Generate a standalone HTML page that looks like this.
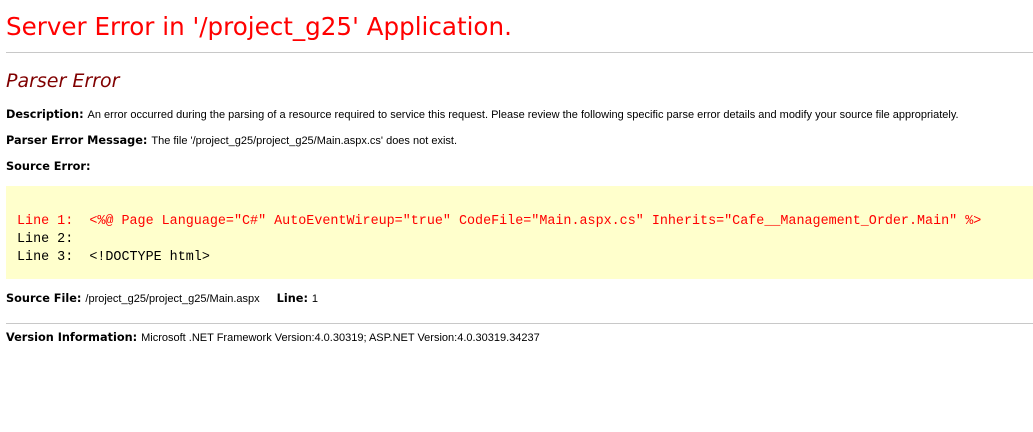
<!DOCTYPE html>
<html><head><style>
body{margin:0;background:#fff;font-family:"Liberation Sans",Arial,sans-serif;font-size:11px;color:#000;position:relative;width:1033px;height:432px;overflow:hidden}
.a{position:absolute;left:6px;white-space:nowrap}
b{font-family:"DejaVu Sans",Verdana,sans-serif;font-weight:bold;font-size:11.3px}
h1{margin:0;font-family:"DejaVu Sans",Verdana,sans-serif;font-weight:normal;font-size:24.6px;color:red}
h2{margin:0;font-family:"DejaVu Sans",Verdana,sans-serif;font-weight:normal;font-style:italic;font-size:19px;color:maroon}
.hr{position:absolute;left:6px;right:0;height:1px;background:#c8c8c8}
.code{position:absolute;left:6px;right:0;top:186px;height:93px;background:#ffffcc}
pre{margin:0;font-family:"Liberation Mono",monospace;font-size:13.4px;line-height:18px;position:absolute;left:11px;top:27px}
.r{color:red}
</style></head><body>
<div class="a" style="top:12px"><h1>Server Error in '/project_g25' Application.</h1></div>
<div class="hr" style="top:52px"></div>
<div class="a" style="top:70px"><h2>Parser Error</h2></div>
<div class="a" style="top:108px"><b>Description: </b>An error occurred during the parsing of a resource required to service this request. Please review the following specific parse error details and modify your source file appropriately.</div>
<div class="a" style="top:134px"><b>Parser Error Message: </b>The file '/project_g25/project_g25/Main.aspx.cs' does not exist.</div>
<div class="a" style="top:160px"><b>Source Error:</b></div>
<div class="code"><pre><span class="r">Line 1:  &lt;%@ Page Language="C#" AutoEventWireup="true" CodeFile="Main.aspx.cs" Inherits="Cafe__Management_Order.Main" %&gt;</span>
Line 2:  
Line 3:  &lt;!DOCTYPE html&gt;</pre></div>
<div class="a" style="top:292px"><b>Source File: </b>/project_g25/project_g25/Main.aspx<span style="display:inline-block;width:17px"></span><b>Line: </b>1</div>
<div class="hr" style="top:323px"></div>
<div class="a" style="top:331px"><b>Version Information: </b>Microsoft .NET Framework Version:4.0.30319; ASP.NET Version:4.0.30319.34237</div>
</body></html>
